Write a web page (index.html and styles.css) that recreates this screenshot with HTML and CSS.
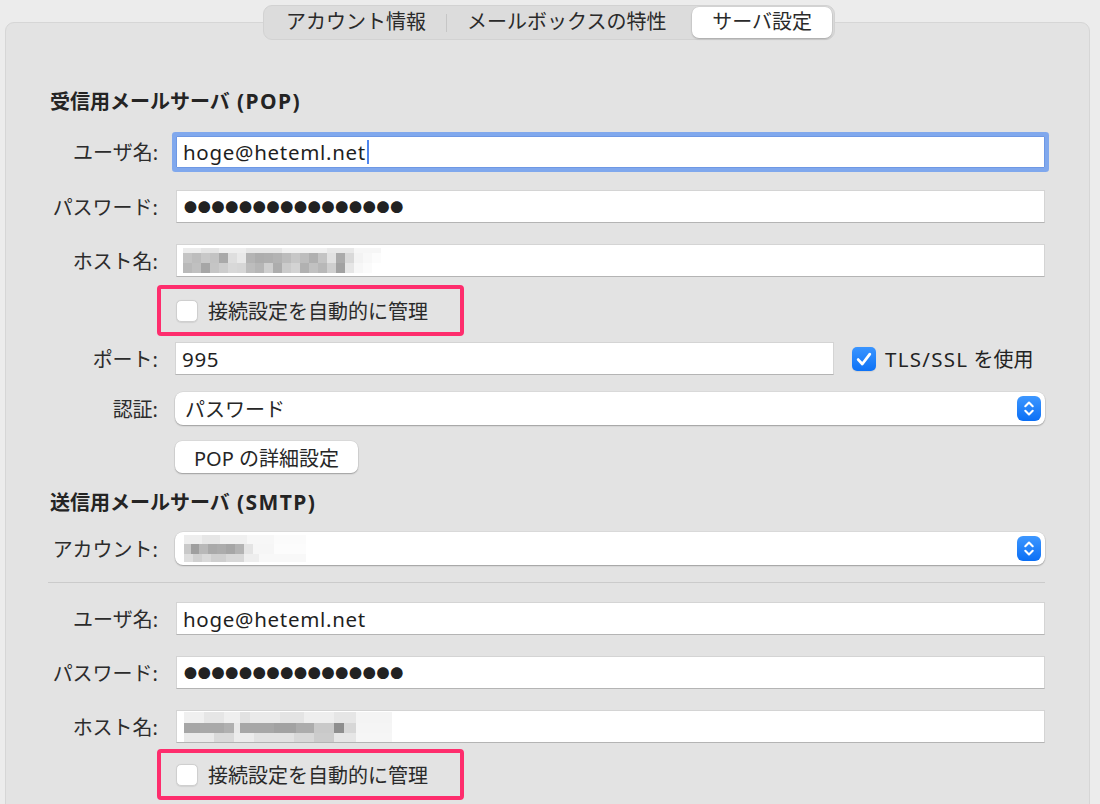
FILE: index.html
```html
<!DOCTYPE html>
<html lang="ja">
<head>
<meta charset="utf-8">
<title>サーバ設定</title>
<link rel="stylesheet" href="styles.css">
</head>
<body>
<div class="window">
  <div class="tabs">
    <div class="tab">アカウント情報</div>
    <div class="tab-sep"></div>
    <div class="tab">メールボックスの特性</div>
    <div class="tab selected">サーバ設定</div>
  </div>

  <div class="panel">
    <div class="form">
      <h2 class="section-title first">受信用メールサーバ <span class="latin">(POP)</span></h2>

      <div class="row gap-22">
        <span class="label">ユーザ名:</span>
        <div class="field focused"><span class="value">hoge@heteml.net</span><span class="caret"></span></div>
      </div>
      <div class="row gap-22">
        <span class="label">パスワード:</span>
        <div class="field"><span class="dots">●●●●●●●●●●●●●●●●</span></div>
      </div>
      <div class="row gap-21">
        <span class="label">ホスト名:</span>
        <div class="field">
          <div class="mosaic mosaic-pop">
            <div class="mrow pop-a"></div>
            <div class="mrow pop-b"></div>
            <div class="mrow pop-c"></div>
          </div>
        </div>
      </div>
      <div class="annot gap-8">
        <span class="checkbox"></span>
        <span class="check-text">接続設定を自動的に管理</span>
      </div>
      <div class="row gap-6">
        <span class="label">ポート:</span>
        <div class="field port"><span class="value">995</span></div>
        <span class="checkbox checked">
          <svg width="24" height="24" viewBox="0 0 24 24"><path d="M6.2 12.6 L10.3 17 L17.8 7.2" fill="none" stroke="#fff" stroke-width="2.8" stroke-linecap="round" stroke-linejoin="round"/></svg>
        </span>
        <span class="tls-text"><span class="value">TLS/SSL</span> を使用</span>
      </div>
      <div class="row gap-17">
        <span class="label">認証:</span>
        <div class="select">
          <span class="select-text">パスワード</span>
          <span class="stepper">
            <svg width="24" height="25" viewBox="0 0 24 25"><path d="M8.3 10.2 L12 6.6 L15.7 10.2 M8.3 14.8 L12 18.4 L15.7 14.8" fill="none" stroke="#fff" stroke-width="2.1" stroke-linecap="round" stroke-linejoin="round"/></svg>
          </span>
        </div>
      </div>
      <div class="row gap-16 btn-row">
        <span class="label"></span>
        <button class="button">POP の詳細設定</button>
      </div>

      <h2 class="section-title second">送信用メールサーバ <span class="latin">(SMTP)</span></h2>

      <div class="row gap-17">
        <span class="label">アカウント:</span>
        <div class="select">
          <div class="mosaic mosaic-acct">
            <div class="mrow acct-a"></div>
            <div class="mrow acct-b"></div>
            <div class="mrow acct-c"></div>
          </div>
          <span class="stepper">
            <svg width="24" height="25" viewBox="0 0 24 25"><path d="M8.3 10.2 L12 6.6 L15.7 10.2 M8.3 14.8 L12 18.4 L15.7 14.8" fill="none" stroke="#fff" stroke-width="2.1" stroke-linecap="round" stroke-linejoin="round"/></svg>
          </span>
        </div>
      </div>
      <div class="separator"></div>
      <div class="row gap-19">
        <span class="label">ユーザ名:</span>
        <div class="field"><span class="value">hoge@heteml.net</span></div>
      </div>
      <div class="row gap-21">
        <span class="label">パスワード:</span>
        <div class="field"><span class="dots">●●●●●●●●●●●●●●●●</span></div>
      </div>
      <div class="row gap-21">
        <span class="label">ホスト名:</span>
        <div class="field">
          <div class="mosaic mosaic-smtp">
            <div class="mrow smtp-a"></div>
            <div class="mrow smtp-b"></div>
            <div class="mrow smtp-c"></div>
          </div>
        </div>
      </div>
      <div class="annot gap-6">
        <span class="checkbox"></span>
        <span class="check-text">接続設定を自動的に管理</span>
      </div>
    </div>
  </div>
</div>
</body>
</html>
```

FILE: styles.css
```css
* { box-sizing: border-box; }

html, body {
  margin: 0;
  padding: 0;
}

body {
  background: #ececec;
  font-family: "Noto Sans", "Noto Sans CJK JP", sans-serif;
  color: #262626;
  width: 1100px;
  height: 804px;
  overflow: hidden;
}

.window {
  position: relative;
  padding-top: 22px;
}

/* Segmented tabs (overlapping the panel's top edge) */
.tabs {
  position: absolute;
  top: 5px;
  left: 263px;
  width: 572px;
  height: 35px;
  display: flex;
  align-items: center;
  padding: 2px;
  background: #dcdcdc;
  border: 1px solid #d2d2d2;
  border-radius: 9px;
  z-index: 2;
}

.tab {
  height: 31px;
  line-height: 30px;
  padding: 0 20px;
  font-size: 20px;
  color: #2a2a2a;
  white-space: nowrap;
}

.tab.selected {
  margin-left: auto;
  background: #ffffff;
  border-radius: 7px;
  box-shadow: 0 1px 2px rgba(0, 0, 0, 0.22), 0 0 0 0.5px rgba(0, 0, 0, 0.06);
}

.tab-sep {
  width: 1px;
  height: 18px;
  background: #c6c6c6;
  flex: none;
}

/* Main panel */
.panel {
  margin-left: 5px;
  width: 1085px;
  min-height: 800px;
  background: #e3e3e3;
  border: 1px solid #d6d6d6;
  border-radius: 9px;
}

.form {
  padding: 0 44px 0 42px;
  display: flex;
  flex-direction: column;
}

.section-title {
  flex: none;
  margin: 0 0 0 2px;
  height: 24px;
  font-size: 20px;
  line-height: 24px;
  font-weight: 700;
  color: #242424;
  white-space: nowrap;
}

.section-title .latin {
  font-size: 21px;
  line-height: 20px;
  letter-spacing: 1.4px;
  margin-left: 2px;
}

.section-title.first { margin-top: 67px; }
.section-title.second { margin-top: 18px; }

.row {
  flex: none;
  display: flex;
  align-items: center;
  height: 33px;
}

.gap-6 { margin-top: 6px; }
.gap-8 { margin-top: 8px; }
.gap-16 { margin-top: 16px; }
.gap-17 { margin-top: 17px; }
.gap-19 { margin-top: 19px; }
.gap-21 { margin-top: 21px; }
.gap-22 { margin-top: 22px; }

.section-title.first + .row { margin-top: 21px; }

.label {
  flex: none;
  width: 110px;
  margin-right: 18px;
  text-align: right;
  font-size: 20px;
  color: #2c2c2c;
  white-space: nowrap;
}

.field {
  flex: 1;
  height: 33px;
  display: flex;
  align-items: center;
  background: #ffffff;
  border: 1px solid #d4d4d4;
  border-bottom-color: #b4b4b4;
  padding-left: 6px;
  font-size: 20px;
  color: #1f1f1f;
  white-space: nowrap;
}

.value {
  font-size: 20.5px;
  letter-spacing: 0.7px;
}

.field.focused {
  height: 32px;
  border-color: #6e98e4;
  border-radius: 1px;
  box-shadow: 0 0 0 4px #80a8ed;
}

.caret {
  display: inline-block;
  width: 2px;
  height: 24px;
  margin-left: 1px;
  background: #4f86ee;
}

.dots {
  font-family: "Noto Sans CJK JP", sans-serif;
  font-size: 13px;
  letter-spacing: 0.75px;
  color: #222222;
  margin-left: 1px;
}

.field.port {
  flex: none;
  width: 659px;
  margin-left: -1px;
}

/* Blurred (pixelated) redacted values */
.mosaic { display: flex; flex-direction: column; }
.mrow { flex: none; }

.mosaic-pop { width: 198px; margin-left: 0; }
.pop-a {
  height: 5px;
  background: linear-gradient(90deg,
    #ececec 0 18px, #e4e4e4 18px 36px, #eeeeee 36px 63px, #e6e6e6 63px 99px,
    #f0f0f0 99px 144px, #e8e8e8 144px 171px, #f6f6f6 171px 198px);
}
.pop-b {
  height: 10px;
  background: linear-gradient(90deg,
    #c4c4c4 0 9px, #bdbdbd 9px 18px, #c8c8c8 18px 27px, #c3c3c3 27px 36px,
    #a9a9a9 36px 45px, #dedede 45px 54px, #e9e9e9 54px 63px, #b4b4b4 63px 72px,
    #adadad 72px 81px, #afafaf 81px 90px, #b3b3b3 90px 99px, #bcbcbc 99px 108px,
    #c7c7c7 108px 117px, #bdbdbd 117px 126px, #b0b0b0 126px 135px, #c4c4c4 135px 144px,
    #e2e2e2 144px 153px, #ababab 153px 162px, #d9d9d9 162px 171px, #f3f3f3 171px 180px,
    #f8f8f8 180px 189px, #fcfcfc 189px 198px);
}
.pop-c {
  height: 10px;
  background: linear-gradient(90deg,
    #b9b9b9 0 9px, #c0c0c0 9px 18px, #a6a6a6 18px 27px, #c5c5c5 27px 36px,
    #cdcdcd 36px 45px, #d8d8d8 45px 54px, #d6d6d6 54px 63px, #bdbdbd 63px 72px,
    #b6b6b6 72px 81px, #cfcfcf 81px 90px, #adadad 90px 99px, #cbcbcb 99px 108px,
    #d3d3d3 108px 117px, #b1b1b1 117px 126px, #c1c1c1 126px 135px, #b8b8b8 135px 144px,
    #cfcfcf 144px 153px, #a2a2a2 153px 162px, #e6e6e6 162px 171px, #f7f7f7 171px 180px,
    #fbfbfb 180px 189px, #ffffff 189px 198px);
}

.mosaic-acct { width: 122px; margin-left: -1px; }
.acct-a {
  height: 9px;
  background: linear-gradient(90deg,
    #eeeeee 0 18px, #e6e6e6 18px 36px, #f0f0f0 36px 63px, #f7f7f7 63px 90px, #fbfbfb 90px 122px);
}
.acct-b {
  height: 10px;
  background: linear-gradient(90deg,
    #c9c9c9 0 7px, #9f9f9f 7px 15px, #b8b8b8 15px 24px, #a9a9a9 24px 33px,
    #acacac 33px 42px, #a6a6a6 42px 51px, #b3b3b3 51px 60px, #e4e4e4 60px 69px,
    #f6f6f6 69px 90px, #fcfcfc 90px 122px);
}
.acct-c {
  height: 8px;
  background: linear-gradient(90deg,
    #dedede 0 9px, #d0d0d0 9px 18px, #d9d9d9 18px 27px, #cfcfcf 27px 42px,
    #d8d8d8 42px 60px, #eeeeee 60px 75px, #f8f8f8 75px 122px);
}

.mosaic-smtp { width: 208px; margin-left: 1px; }
.smtp-a {
  height: 11px;
  background: linear-gradient(90deg,
    #f0f0f0 0 20px, #e6e6e6 20px 40px, #efefef 40px 56px, #e2e2e2 56px 66px,
    #eaeaea 66px 96px, #e4e4e4 96px 120px, #eeeeee 120px 150px, #e6e6e6 150px 172px,
    #f4f4f4 172px 208px);
}
.smtp-b {
  height: 10px;
  background: linear-gradient(90deg,
    #a6a6a6 0 16px, #a9a9a9 16px 40px, #b0b0b0 40px 50px, #e9e9e9 50px 56px,
    #a7a7a7 56px 90px, #a2a2a2 90px 112px, #acacac 112px 130px, #c9c9c9 130px 150px,
    #8e8e8e 150px 160px, #d7d7d7 160px 172px, #f5f5f5 172px 208px);
}
.smtp-c {
  height: 9px;
  background: linear-gradient(90deg,
    #eaeaea 0 30px, #dadada 30px 50px, #ececec 50px 70px, #e2e2e2 70px 110px,
    #d8d8d8 110px 130px, #cccccc 130px 150px, #e6e6e6 150px 172px, #f6f6f6 172px 208px);
}

/* Pink annotation frame around checkbox */
.annot {
  flex: none;
  margin-left: 109px;
  width: 307px;
  height: 51px;
  display: flex;
  align-items: center;
  padding-left: 15px;
  border: 4px solid #fe2d6d;
  border-radius: 4px;
}

.checkbox {
  flex: none;
  width: 22px;
  height: 22px;
  border-radius: 5px;
  background: #ffffff;
  border: 1px solid #cfcfcf;
  box-shadow: 0 0.5px 1px rgba(0, 0, 0, 0.08);
}

.check-text {
  margin-left: 10px;
  font-size: 20px;
  color: #2a2a2a;
  white-space: nowrap;
}

.checkbox.checked {
  width: 24px;
  height: 24px;
  margin-left: 18px;
  border: none;
  border-radius: 5px;
  background: linear-gradient(#3a95ff, #0d72f6);
  display: flex;
}

.tls-text {
  margin-left: 9px;
  font-size: 20px;
  color: #232323;
  white-space: nowrap;
}

.tls-text .value {
  letter-spacing: 1.3px;
}

/* Popup (select) */
.select {
  flex: 1;
  height: 33px;
  margin-left: -1px;
  display: flex;
  align-items: center;
  background: #ffffff;
  border-radius: 8px;
  padding: 0 4px 0 10px;
  box-shadow: 0 0 0 0.5px rgba(0, 0, 0, 0.08), 0 1px 1.5px rgba(0, 0, 0, 0.28);
}

.select-text {
  font-size: 20px;
  color: #262626;
}

.stepper {
  margin-left: auto;
  width: 24px;
  height: 25px;
  border-radius: 6px;
  background: linear-gradient(#3d97ff, #0b6ff5);
  display: flex;
}

/* Push button */
.btn-row { height: 32px; }

.button {
  margin-left: -1px;
  width: 183px;
  height: 32px;
  padding: 0;
  border: none;
  border-radius: 7px;
  background: #ffffff;
  box-shadow: 0 0 0 0.5px rgba(0, 0, 0, 0.08), 0 1px 1.5px rgba(0, 0, 0, 0.28);
  font-family: "Noto Sans", "Noto Sans CJK JP", sans-serif;
  font-size: 20px;
  color: #262626;
}

.separator {
  flex: none;
  margin-top: 17px;
  height: 1px;
  background: #cbcbcb;
}
```
